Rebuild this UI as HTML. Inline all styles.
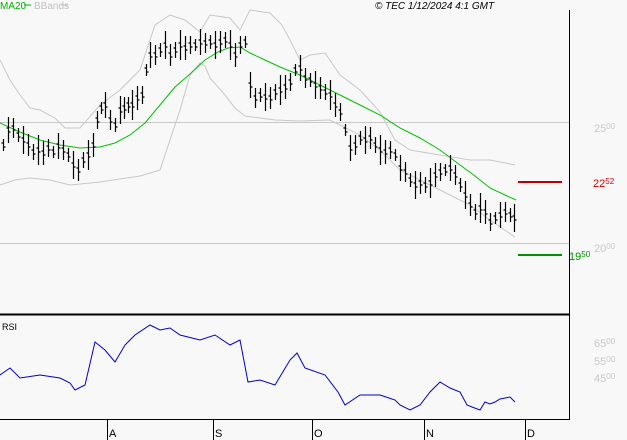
<!DOCTYPE html><html><head><style>
body{margin:0;background:#f8f8f8;}
svg{display:block;font-family:"Liberation Sans",sans-serif;}
</style></head><body>
<svg width="627" height="440" viewBox="0 0 627 440">
<rect width="627" height="440" fill="#f8f8f8"/>
<text x="0" y="9" font-size="10" fill="#00b000">MA20</text><line x1="24" y1="5" x2="31" y2="5" stroke="#00b000"/>
<text x="34" y="9" font-size="10" fill="#c0c0c0">BBands</text><line x1="61" y1="5" x2="68" y2="5" stroke="#c0c0c0"/>
<text x="375" y="9" font-size="10" font-style="italic" fill="#000">© TEC 1/12/2024 4:1 GMT</text>
<line x1="0" y1="122.5" x2="569" y2="122.5" stroke="#c8c8c8"/>
<line x1="0" y1="243.5" x2="569" y2="243.5" stroke="#c8c8c8"/>
<polyline fill="none" stroke="#c8c8c8" points="0,60 10,80 20,95 30,108 40,110 55,118 65,128 80,128 100,105 120,90 140,70 150,40 155,25 170,15 185,20 200,32 210,15 230,18 240,30 250,10 270,13 282,25 290,40 300,60 310,55 325,53 340,75 360,90 380,112 395,140 410,150 440,155 470,160 490,160 515,165"/>
<polyline fill="none" stroke="#c8c8c8" points="0,185 15,180 30,178 50,180 70,185 100,182 140,176 160,170 170,140 180,110 190,75 200,63 205,66 210,78 225,95 235,108 245,116 260,118 275,120 300,121 330,120 340,125 360,135 380,150 400,170 420,180 440,190 470,205 490,220 515,237"/>
<polyline fill="none" stroke="#00c000" points="0,123 20,132 40,140 60,145 80,148 100,147 115,143 130,135 145,123 160,105 175,87 190,74 205,60 218,52 228,48 240,47 250,53 265,60 280,67 300,75 320,85 340,95 360,105 380,115 400,128 420,138 440,150 460,165 475,176 490,188 505,195 516,200"/>
<g stroke="#000" stroke-width="1.2" fill="none" id="bars"></g>
<line x1="518" y1="182" x2="562" y2="182" stroke="#c00000" stroke-width="2"/>
<line x1="518" y1="255" x2="562" y2="255" stroke="#009000" stroke-width="2"/>
<text x="593" y="187" font-size="11" fill="#d00000">22<tspan font-size="8" dy="-3">52</tspan></text>
<text x="569" y="260" font-size="11" fill="#009000">19<tspan font-size="8" dy="-3">50</tspan></text>
<g font-size="11" fill="#c8c8c8">
<text x="594" y="132">25<tspan font-size="8" dy="-3">00</tspan></text>
<text x="594" y="252">20<tspan font-size="8" dy="-3">00</tspan></text>
<text x="594" y="347">65<tspan font-size="8" dy="-3">00</tspan></text>
<text x="594" y="365">55<tspan font-size="8" dy="-3">00</tspan></text>
<text x="594" y="382">45<tspan font-size="8" dy="-3">00</tspan></text>
</g>
<line x1="569.5" y1="10" x2="569.5" y2="419" stroke="#000"/>
<line x1="0" y1="314.5" x2="570" y2="314.5" stroke="#000" stroke-width="2"/>
<line x1="0" y1="419.5" x2="570" y2="419.5" stroke="#000"/>
<text x="2" y="330" font-size="9" fill="#000">RSI</text>
<polyline fill="none" stroke="#0000d0" points="0,375 10,368 20,378 40,375 60,378 70,383 75,390 85,385 95,342 105,350 115,362 125,345 135,335 150,325 160,330 170,328 180,335 200,340 215,335 230,345 240,340 248,382 260,380 275,385 290,360 297,353 305,368 325,375 338,392 345,405 360,395 380,395 395,400 400,405 410,410 420,405 430,392 440,382 450,388 460,392 467,405 472,407 480,410 485,402 490,404 495,402 500,399 510,397 515,402"/>
<g stroke="#000"><line x1="107.5" y1="420" x2="107.5" y2="440"/><line x1="213.5" y1="420" x2="213.5" y2="440"/><line x1="312.5" y1="420" x2="312.5" y2="440"/><line x1="424.5" y1="420" x2="424.5" y2="440"/><line x1="525.5" y1="420" x2="525.5" y2="440"/></g>
<g font-size="11" fill="#000"><text x="109" y="437">A</text><text x="215" y="437">S</text><text x="314" y="437">O</text><text x="426" y="437">N</text><text x="527" y="437">D</text></g>
</svg>
<script>
var pts=[[3,145],[8,130],[13,128],[18,135],[23,140],[28,145],[33,152],[38,150],[43,153],[48,148],[53,152],[58,146],[63,150],[68,155],[73,165],[78,170],[83,160],[88,155],[93,145],[97,120],[101,108],[105,105],[110,120],[115,125],[120,110],[124,108],[128,105],[132,105],[137,98],[142,95],[146,70],[150,55],[155,55],[160,50],[165,45],[170,55],[175,50],[180,45],[185,48],[190,45],[195,45],[200,42],[205,43],[210,42],[215,45],[220,42],[225,40],[230,45],[235,55],[240,45],[245,42],[250,85],[255,98],[260,95],[265,97],[270,98],[275,92],[280,90],[285,87],[290,82],[295,70],[300,68],[305,78],[310,80],[315,85],[320,88],[325,92],[330,95],[335,105],[340,112],[345,130],[350,148],[355,145],[360,138],[365,140],[370,138],[375,145],[380,150],[385,152],[390,150],[395,155],[400,168],[405,172],[410,180],[415,185],[420,183],[425,185],[430,183],[435,175],[440,172],[445,170],[450,168],[455,175],[460,185],[465,195],[470,205],[475,212],[480,208],[485,212],[490,222],[495,218],[500,215],[505,212],[510,215],[514,218]];
var d="";pts.forEach(function(p,i){var x=p[0]+0.5,y=p[1],h=6+(i*7)%10;d+="M"+x+" "+(y-h)+"V"+(y+h)+"M"+(x-2)+" "+(y-2)+"H"+x+"M"+x+" "+(y+2)+"H"+(x+2);});
var g=document.getElementById("bars");var pa=document.createElementNS("http://www.w3.org/2000/svg","path");pa.setAttribute("d",d);g.appendChild(pa);
</script>
</body></html>
